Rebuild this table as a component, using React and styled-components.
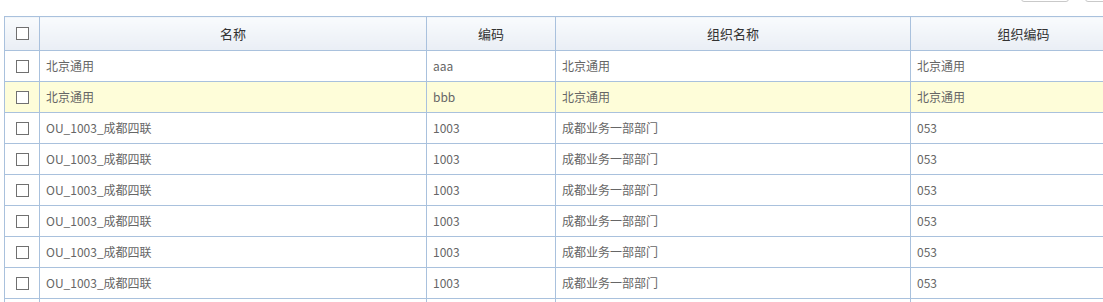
import React from 'react';
import styled, { createGlobalStyle } from 'styled-components';

const GlobalStyle = createGlobalStyle`
  html, body {
    margin: 0;
    padding: 0;
    background: #ffffff;
    overflow: hidden;
  }
  body {
    font-family: 'Microsoft YaHei', 'Noto Sans CJK SC', 'Noto Sans', sans-serif;
  }
`;

const Page = styled.div`
  width: 1103px;
  height: 302px;
  overflow: hidden;
`;

const Toolbar = styled.div`
  display: flex;
  justify-content: flex-end;
  gap: 16px;
  height: 24px;
  margin-top: -22px;
  margin-right: -30px;
`;

const ToolButton = styled.button`
  width: 48px;
  height: 24px;
  border: 1px solid #c9c9c9;
  border-radius: 3px;
  background: #ffffff;
`;

const TableWrap = styled.div`
  padding: 14px 0 0 4px;
  overflow: hidden;
`;

const Table = styled.table`
  border-collapse: collapse;
  table-layout: fixed;
  width: 1132px;
`;

const HeadCell = styled.th`
  height: 33px;
  padding: 0;
  line-height: 18px;
  border: 1px solid #a9c1dd;
  background: linear-gradient(to bottom, #f9fbfd, #e9eef5);
  color: #333333;
  font-size: 13px;
  font-weight: normal;
  text-align: center;
  vertical-align: middle;
`;

const Row = styled.tr`
  background: ${props => (props.highlight ? '#fefdd9' : '#ffffff')};
`;

const Cell = styled.td`
  height: 30px;
  padding: 0 0 0 6px;
  line-height: 18px;
  border: 1px solid #a9c1dd;
  color: #666666;
  font-size: 12px;
  white-space: nowrap;
  overflow: hidden;
  vertical-align: middle;
`;

const CheckCell = styled(Cell)`
  padding: 0;
  text-align: center;
  line-height: 0;
`;

const CheckHead = styled(HeadCell)`
  line-height: 0;
`;

const Box = styled.span`
  display: inline-block;
  width: 11px;
  height: 11px;
  border: 1px solid #707070;
  background: #ffffff;
  vertical-align: middle;
`;

const rows = [
  { name: '北京通用', code: 'aaa', org: '北京通用', orgCode: '北京通用' },
  { name: '北京通用', code: 'bbb', org: '北京通用', orgCode: '北京通用', highlight: true },
  { name: 'OU_1003_成都四联', code: '1003', org: '成都业务一部部门', orgCode: '053' },
  { name: 'OU_1003_成都四联', code: '1003', org: '成都业务一部部门', orgCode: '053' },
  { name: 'OU_1003_成都四联', code: '1003', org: '成都业务一部部门', orgCode: '053' },
  { name: 'OU_1003_成都四联', code: '1003', org: '成都业务一部部门', orgCode: '053' },
  { name: 'OU_1003_成都四联', code: '1003', org: '成都业务一部部门', orgCode: '053' },
  { name: 'OU_1003_成都四联', code: '1003', org: '成都业务一部部门', orgCode: '053' },
  { name: '', code: '', org: '', orgCode: '', empty: true },
];

export default function App() {
  return (
    <Page>
      <GlobalStyle />
      <Toolbar>
        <ToolButton />
        <ToolButton />
      </Toolbar>
      <TableWrap>
        <Table>
          <colgroup>
            <col style={{ width: 35 }} />
            <col style={{ width: 387 }} />
            <col style={{ width: 129 }} />
            <col style={{ width: 355 }} />
            <col style={{ width: 226 }} />
          </colgroup>
          <thead>
            <tr>
              <CheckHead><Box /></CheckHead>
              <HeadCell>名称</HeadCell>
              <HeadCell>编码</HeadCell>
              <HeadCell>组织名称</HeadCell>
              <HeadCell>组织编码</HeadCell>
            </tr>
          </thead>
          <tbody>
            {rows.map((r, i) => (
              <Row key={i} highlight={r.highlight}>
                <CheckCell>{!r.empty && <Box />}</CheckCell>
                <Cell>{r.name}</Cell>
                <Cell>{r.code}</Cell>
                <Cell>{r.org}</Cell>
                <Cell>{r.orgCode}</Cell>
              </Row>
            ))}
          </tbody>
        </Table>
      </TableWrap>
    </Page>
  );
}
